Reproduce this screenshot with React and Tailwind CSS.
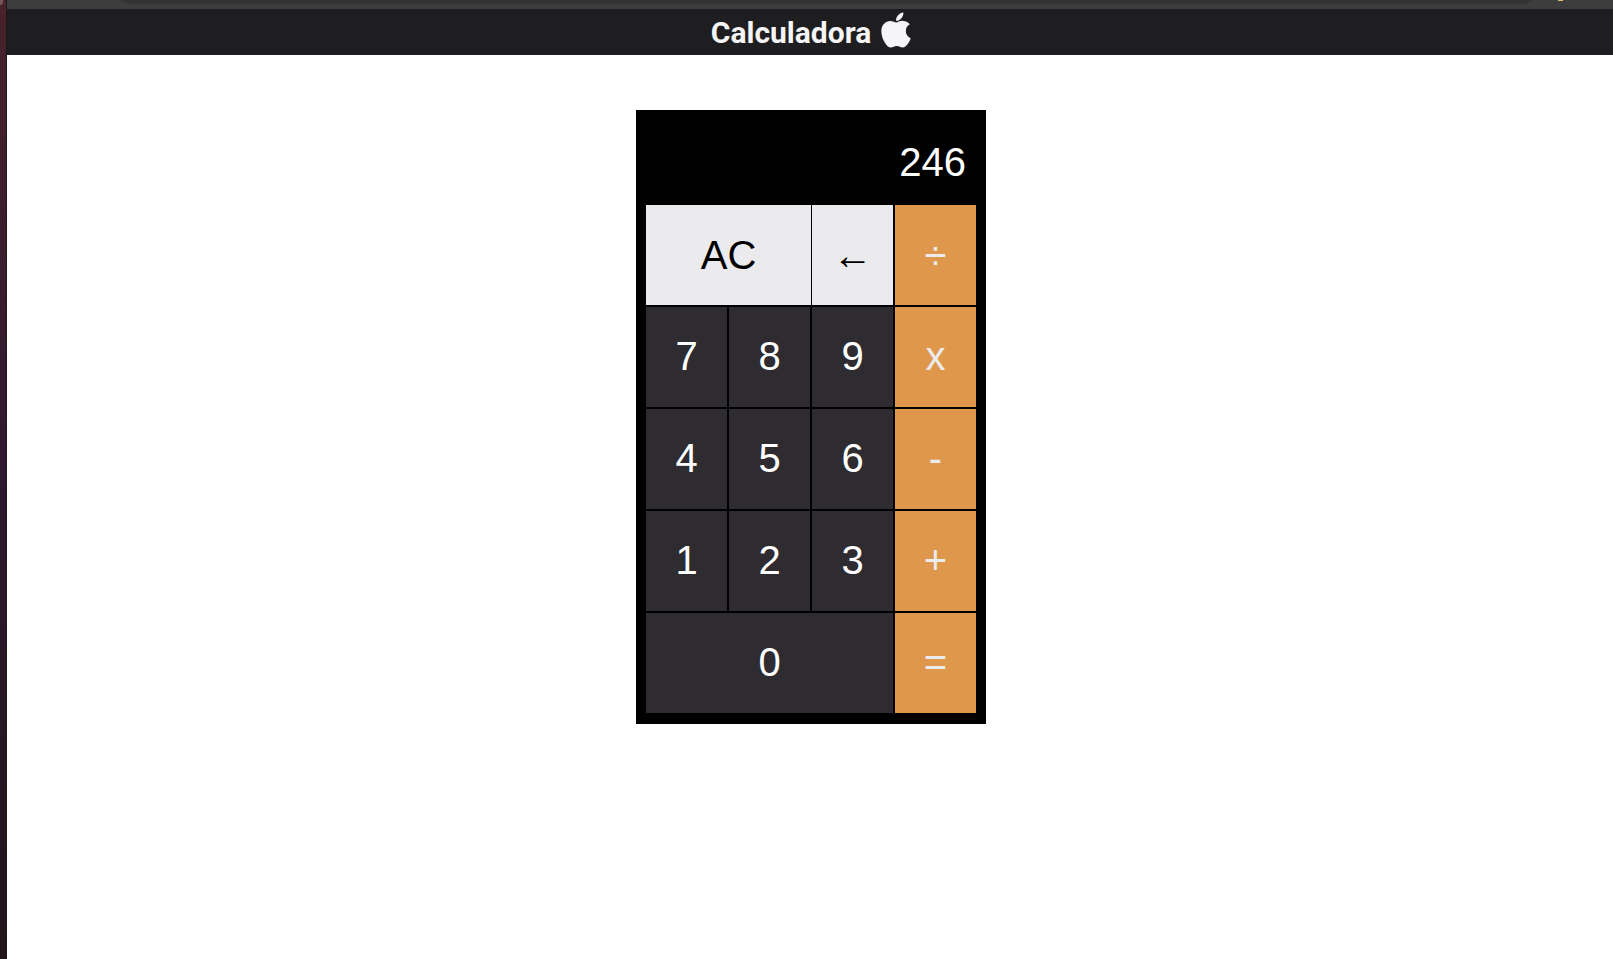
import { useState } from "react";
import { FaApple } from "react-icons/fa";

const tones = {
  light: "bg-[#ebebed] text-black",
  dark: "bg-[#2e2c31] text-white",
  orange: "bg-[#df974c] text-[#ebebed]",
};

const rows = [
  [
    { label: "7", tone: "dark" },
    { label: "8", tone: "dark" },
    { label: "9", tone: "dark" },
    { label: "x", tone: "orange" },
  ],
  [
    { label: "4", tone: "dark" },
    { label: "5", tone: "dark" },
    { label: "6", tone: "dark" },
    { label: "-", tone: "orange" },
  ],
  [
    { label: "1", tone: "dark" },
    { label: "2", tone: "dark" },
    { label: "3", tone: "dark" },
    { label: "+", tone: "orange" },
  ],
  [
    { label: "0", tone: "dark", span: "col-span-3" },
    { label: "=", tone: "orange" },
  ],
];

function Key({ label, tone, span = "", onPress }) {
  return (
    <button
      type="button"
      onClick={() => onPress(label)}
      className={`flex h-[100px] items-center justify-center text-[40px] leading-[46px] ${tones[tone]} ${span}`}
    >
      {label}
    </button>
  );
}

function compute(a, op, b) {
  if (op === "+") return a + b;
  if (op === "-") return a - b;
  if (op === "x") return a * b;
  return a / b;
}

function Calculator() {
  const [value, setValue] = useState("246");
  const [pending, setPending] = useState(null);
  const [fresh, setFresh] = useState(false);

  const press = (key) => {
    if (/^\d$/.test(key)) {
      setValue(fresh || value === "0" ? key : value + key);
      setFresh(false);
    } else if (key === "AC") {
      setValue("0");
      setPending(null);
    } else if (key === "←") {
      setValue(value.length > 1 ? value.slice(0, -1) : "0");
    } else {
      const result = pending ? compute(pending.total, pending.op, Number(value)) : Number(value);
      setValue(String(result));
      setPending(key === "=" ? null : { total: result, op: key });
      setFresh(true);
    }
  };

  return (
    <section className="w-[350px] bg-black px-[10px] pb-[11px] font-['Liberation_Sans',Arial,sans-serif]">
      <output className="block overflow-hidden px-[10px] pt-[29px] pb-[20px] text-right text-[40px] leading-[46px] text-white">
        {value}
      </output>
      <div className="flex flex-col gap-[2px]">
        <div className="flex">
          <div className="mr-[2px] flex grow gap-px">
            <Key label="AC" tone="light" span="grow" onPress={press} />
            <Key label="←" tone="light" span="w-[81px]" onPress={press} />
          </div>
          <Key label="÷" tone="orange" span="w-[81px]" onPress={press} />
        </div>
        {rows.map((row) => (
          <div key={row[0].label} className="grid grid-cols-4 gap-[2px] *:pb-[2px]">
            {row.map((key) => (
              <Key key={key.label} {...key} onPress={press} />
            ))}
          </div>
        ))}
      </div>
    </section>
  );
}

export default function App() {
  return (
    <div className="flex min-h-screen bg-white">
      <div className="flex w-[7px] shrink-0 items-start border-r border-[#1c1718] bg-linear-to-b from-[#49222a] via-[#2e1830] to-[#21151b]">
        <div className="h-[5px] w-[3px] rounded-br-sm bg-[#755459]" />
      </div>
      <div className="flex grow flex-col">
        <div className="flex h-[9px] items-start overflow-hidden bg-[#3d3d3d] pr-[78px] pl-[111px]">
          <div className="-mt-5 h-6 grow rounded-b-xl bg-[#333333]" />
          <div className="-mr-[28px] ml-[23px] h-px w-[5px] bg-[#dcc268]" />
        </div>
        <header className="flex h-[46px] items-center justify-center gap-[9px] bg-[#1e1e20] pl-[3px] text-[#f5f5f7]">
          <h1 className="pt-[2px] font-[Roboto,sans-serif] text-[30px] leading-[46px] font-bold">Calculadora</h1>
          <FaApple className="mb-1 h-10 w-[32px]" aria-hidden="true" />
        </header>
        <main className="flex justify-center pt-[55px] pl-[2px]">
          <Calculator />
        </main>
      </div>
    </div>
  );
}
